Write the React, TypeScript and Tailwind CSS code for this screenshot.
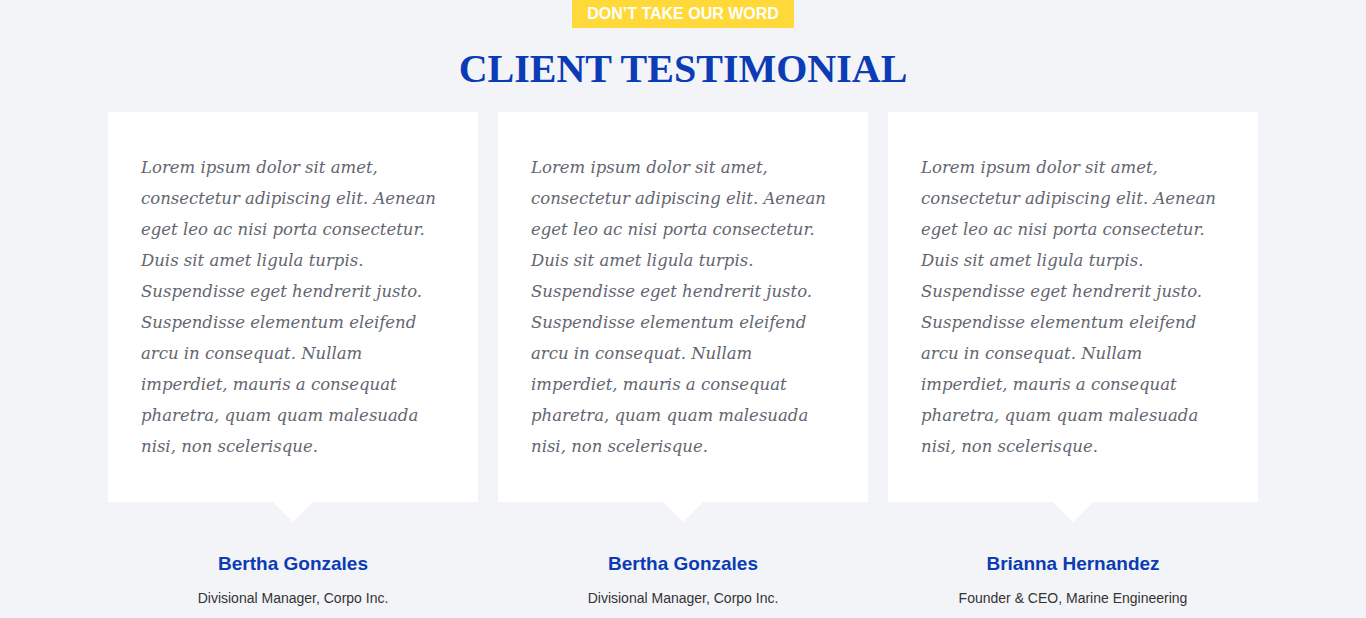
const lines = [
  'Lorem ipsum dolor sit amet,',
  'consectetur adipiscing elit. Aenean',
  'eget leo ac nisi porta consectetur.',
  'Duis sit amet ligula turpis.',
  'Suspendisse eget hendrerit justo.',
  'Suspendisse elementum eleifend',
  'arcu in consequat. Nullam',
  'imperdiet, mauris a consequat',
  'pharetra, quam quam malesuada',
  'nisi, non scelerisque.',
];

const people = [
  { name: 'Bertha Gonzales', role: 'Divisional Manager, Corpo Inc.' },
  { name: 'Bertha Gonzales', role: 'Divisional Manager, Corpo Inc.' },
  { name: 'Brianna Hernandez', role: 'Founder & CEO, Marine Engineering' },
];

function Card({ name, role }: { name: string; role: string }) {
  return (
    <div className="w-[370px] flex flex-col items-center">
      <div className="relative w-full h-[390px] bg-white pl-[33px] pt-[40px]">
        <p className="font-['DejaVu_Serif',serif] italic text-[16.5px] leading-[31px] text-[#636670]">
          {lines.map((l, i) => (
            <span key={i} className="block whitespace-nowrap">
              {l}
            </span>
          ))}
        </p>
        <div className="absolute left-1/2 -translate-x-1/2 top-full w-0 h-0 border-l-[20px] border-r-[20px] border-t-[20px] border-l-transparent border-r-transparent border-t-white" />
      </div>
      <h3 className="mt-[50px] font-['Liberation_Sans',Arial,sans-serif] font-bold text-[19px] leading-[24px] text-[#0b3bb5]">
        {name}
      </h3>
      <p className="mt-[14px] font-['Liberation_Sans',Arial,sans-serif] text-[14px] leading-[16px] text-[#333]">
        {role}
      </p>
    </div>
  );
}

export default function App() {
  return (
    <div className="min-h-[618px] bg-[#f3f4f8] flex flex-col items-center">
      <div className="bg-[#ffd93a] px-[15px] h-[28px] flex items-center font-['Liberation_Sans',Arial,sans-serif] font-bold text-[16px] text-white">
        DON’T TAKE OUR WORD
      </div>
      <h2 className="mt-[20px] font-['Liberation_Serif','Times_New_Roman',serif] font-bold text-[40px] leading-[42px] text-[#0b3bb5]">
        CLIENT TESTIMONIAL
      </h2>
      <div className="mt-[22px] flex gap-[20px]">
        {people.map((p, i) => (
          <Card key={i} {...p} />
        ))}
      </div>
    </div>
  );
}
